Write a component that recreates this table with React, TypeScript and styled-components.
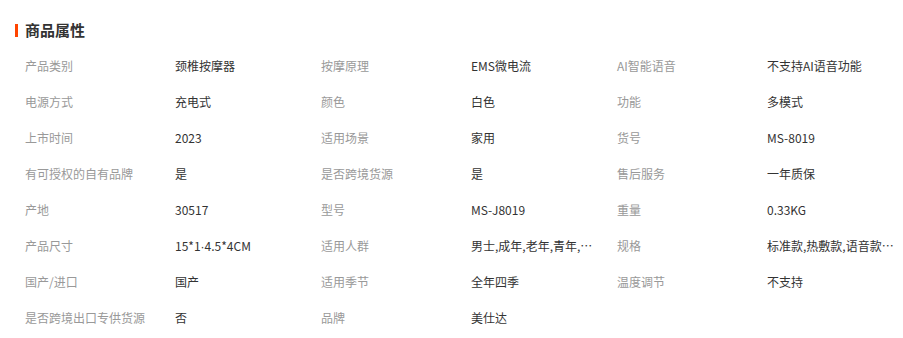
import React from "react";
import styled, { createGlobalStyle } from "styled-components";

const Global = createGlobalStyle`
  html, body { margin: 0; padding: 0; background: #fff; }
  body { font-family: "Noto Sans CJK SC", "Microsoft YaHei", sans-serif; }
`;

const Wrap = styled.section`
  width: 903px;
  padding-top: 20px;
`;

const Title = styled.h3`
  margin: 0 0 8px 15px;
  display: flex;
  align-items: center;
  gap: 7px;
  height: 20px;
  font-size: 15px;
  font-weight: 700;
  color: #333;
  line-height: 20px;
`;

const Bar = styled.span`
  width: 3px;
  height: 13px;
  background: #ff4400;
`;

const Grid = styled.dl`
  margin: 0;
  padding-left: 25px;
  display: grid;
  grid-template-columns: repeat(3, 150px 146px);
  grid-auto-rows: 36px;
  align-items: center;
  font-size: 12px;
  line-height: 16px;
`;

const Label = styled.dt`
  color: #999;
  white-space: nowrap;
`;

const Value = styled.dd`
  margin: 0;
  color: #333;
  max-width: 128px;
  white-space: nowrap;
  overflow: hidden;
  text-overflow: ellipsis;
`;

const Narrow = styled.span`
  font-family: "Liberation Sans", Arial, sans-serif;
`;

const items: [string, React.ReactNode][] = [
  ["产品类别", "颈椎按摩器"],
  ["按摩原理", "EMS微电流"],
  ["AI智能语音", "不支持AI语音功能"],
  ["电源方式", "充电式"],
  ["颜色", "白色"],
  ["功能", "多模式"],
  ["上市时间", "2023"],
  ["适用场景", "家用"],
  ["货号", "MS-8019"],
  ["有可授权的自有品牌", "是"],
  ["是否跨境货源", "是"],
  ["售后服务", "一年质保"],
  ["产地", "30517"],
  ["型号", "MS-J8019"],
  ["重量", "0.33KG"],
  [
    "产品尺寸",
    <>
      15*1<Narrow>·</Narrow>4.5*4CM
    </>,
  ],
  ["适用人群", "男士,成年,老年,青年,中年,女士"],
  ["规格", "标准款,热敷款,语音款,豪华款"],
  ["国产/进口", "国产"],
  ["适用季节", "全年四季"],
  ["温度调节", "不支持"],
  ["是否跨境出口专供货源", "否"],
  ["品牌", "美仕达"],
];

export default function App() {
  return (
    <Wrap>
      <Global />
      <Title>
        <Bar />
        商品属性
      </Title>
      <Grid>
        {items.map(([k, v]) => (
          <React.Fragment key={k}>
            <Label>{k}</Label>
            <Value>{v}</Value>
          </React.Fragment>
        ))}
      </Grid>
    </Wrap>
  );
}
